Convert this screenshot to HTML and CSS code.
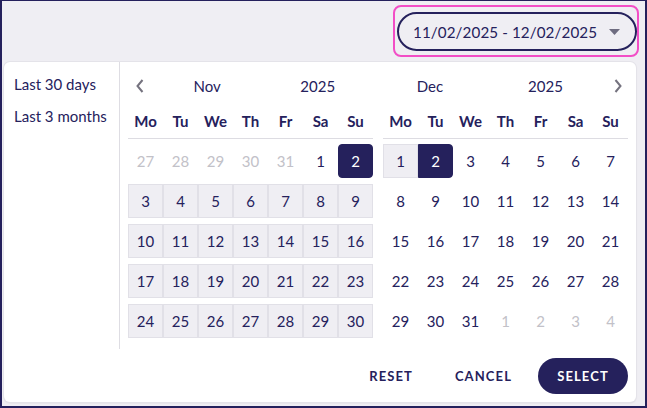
FILE: index.html
```html
<!DOCTYPE html>
<html lang="en">
<head>
<meta charset="utf-8">
<title>Date range picker</title>
<link rel="stylesheet" href="styles.css">
</head>
<body>
<div class="frame">
  <div class="topbar">
    <div class="focus-ring">
      <div class="date-input">
        <span class="date-text">11/02/2025 - 12/02/2025</span>
        <svg class="caret" width="11" height="6" viewBox="0 0 11 6"><path d="M0 0 L11 0 L5.5 6 Z" fill="#6e6c80"/></svg>
      </div>
    </div>
  </div>
  <div class="panel">
    <div class="panel-body">
      <ul class="presets">
        <li>Last 30 days</li>
        <li>Last 3 months</li>
      </ul>
      <div class="calendars">
        <div class="calendar">
          <div class="cal-head cal-head-prev">
            <span class="nav"><svg width="8" height="14" viewBox="0 0 8 14"><path d="M6.5 1 L1.5 7 L6.5 13" fill="none" stroke="#75737f" stroke-width="2"/></svg></span>
            <span class="head-item">Nov</span>
            <span class="head-item">2025</span>
          </div>
          <div class="weekdays">
            <span>Mo</span><span>Tu</span><span>We</span><span>Th</span><span>Fr</span><span>Sa</span><span>Su</span>
          </div>
          <div class="days">
            <span class="day out">27</span><span class="day out">28</span><span class="day out">29</span><span class="day out">30</span><span class="day out">31</span><span class="day">1</span><span class="day sel sel-start sel-end">2</span>
            <span class="day rng">3</span><span class="day rng">4</span><span class="day rng">5</span><span class="day rng">6</span><span class="day rng">7</span><span class="day rng">8</span><span class="day rng">9</span>
            <span class="day rng">10</span><span class="day rng">11</span><span class="day rng">12</span><span class="day rng">13</span><span class="day rng">14</span><span class="day rng">15</span><span class="day rng">16</span>
            <span class="day rng">17</span><span class="day rng">18</span><span class="day rng">19</span><span class="day rng">20</span><span class="day rng">21</span><span class="day rng">22</span><span class="day rng">23</span>
            <span class="day rng">24</span><span class="day rng">25</span><span class="day rng">26</span><span class="day rng">27</span><span class="day rng">28</span><span class="day rng">29</span><span class="day rng">30</span>
          </div>
        </div>
        <div class="calendar">
          <div class="cal-head cal-head-next">
            <span class="head-item month">Dec</span>
            <span class="head-item">2025</span>
            <span class="nav"><svg width="8" height="14" viewBox="0 0 8 14"><path d="M1.5 1 L6.5 7 L1.5 13" fill="none" stroke="#75737f" stroke-width="2"/></svg></span>
          </div>
          <div class="weekdays">
            <span>Mo</span><span>Tu</span><span>We</span><span>Th</span><span>Fr</span><span>Sa</span><span>Su</span>
          </div>
          <div class="days">
            <span class="day rng">1</span><span class="day sel sel-end">2</span><span class="day">3</span><span class="day">4</span><span class="day">5</span><span class="day">6</span><span class="day">7</span>
            <span class="day">8</span><span class="day">9</span><span class="day">10</span><span class="day">11</span><span class="day">12</span><span class="day">13</span><span class="day">14</span>
            <span class="day">15</span><span class="day">16</span><span class="day">17</span><span class="day">18</span><span class="day">19</span><span class="day">20</span><span class="day">21</span>
            <span class="day">22</span><span class="day">23</span><span class="day">24</span><span class="day">25</span><span class="day">26</span><span class="day">27</span><span class="day">28</span>
            <span class="day">29</span><span class="day">30</span><span class="day">31</span><span class="day out">1</span><span class="day out">2</span><span class="day out">3</span><span class="day out">4</span>
          </div>
        </div>
      </div>
    </div>
    <div class="footer">
      <button class="btn btn-text">RESET</button>
      <button class="btn btn-text">CANCEL</button>
      <button class="btn btn-primary">SELECT</button>
    </div>
  </div>
</div>
</body>
</html>
```

FILE: styles.css
```css
* { box-sizing: border-box; }

html, body {
  margin: 0;
  padding: 0;
}

body {
  width: 647px;
  height: 408px;
  overflow: hidden;
  font-family: Lato, "Noto Sans", sans-serif;
  color: #25215c;
}

.frame {
  width: 647px;
  height: 408px;
  background: #efeef3;
  border: 2px solid #24205c;
  border-top-width: 1px;
  display: flex;
  flex-direction: column;
}

.topbar {
  display: flex;
  justify-content: flex-end;
  padding: 4px 6px 0 0;
}

.focus-ring {
  border: 2px solid #f24ec6;
  border-radius: 8px;
  padding: 5px 0 4px 2px;
}

.date-input {
  width: 240px;
  height: 39px;
  border: 2px solid #25215c;
  border-radius: 20px;
  display: flex;
  align-items: center;
  padding: 0 0 0 14px;
}

.date-text {
  font-size: 15.2px;
  color: #25215c;
  white-space: nowrap;
  letter-spacing: 0.1px;
}

.caret { display: block; margin: 1px 0 0 12px; }

.panel {
  margin: 5px 9px 0 2px;
  height: 340px;
  background: #fff;
  border-radius: 6px;
  box-shadow: 0 0 0 1px #e4e3e9, 0 1px 2px rgba(0,0,0,0.12);
  display: flex;
  flex-direction: column;
}

.panel-body {
  display: flex;
  height: 287px;
}

.presets {
  list-style: none;
  margin: 0;
  padding: 11px 0 0 10px;
  width: 116px;
  border-right: 1px solid #dedde3;
  font-size: 15px;
}

.presets li {
  height: 22px;
  line-height: 22px;
  margin-bottom: 10px;
  white-space: nowrap;
}

.calendars {
  display: flex;
  gap: 10px;
  padding: 8px 0 0 8px;
}

.calendar {
  width: 245px;
}

.cal-head {
  display: flex;
  align-items: center;
  height: 32px;
  font-size: 15px;
}

.nav {
  width: 24px;
  display: flex;
  justify-content: center;
  align-items: center;
}

.head-item {
  flex: 1;
  text-align: center;
}

.cal-head-next .month { flex: 0 0 94px; }
.cal-head-next .nav { width: 14px; justify-content: flex-start; }

.weekdays {
  display: grid;
  grid-template-columns: repeat(7, 35px);
  height: 35px;
  margin-top: 2px;
  align-items: center;
  border-bottom: 1px solid #dddce2;
  font-size: 15px;
  font-weight: 700;
  text-align: center;
}

.days {
  display: grid;
  grid-template-columns: repeat(7, 35px);
  grid-auto-rows: 34px;
  row-gap: 6px;
  margin-top: 5px;
}

.day {
  display: flex;
  align-items: center;
  justify-content: center;
  font-size: 15px;
  color: #25215c;
  border: 1px solid transparent;
}

.day.out { color: #c2c1c8; }

.day.rng {
  background: #efeef3;
  border-color: #e1e0e7;
}

.day.sel {
  background: #25215c;
  color: #fff;
  border-color: #25215c;
}

.sel-start { border-top-left-radius: 4px; border-bottom-left-radius: 4px; }
.sel-end { border-top-right-radius: 4px; border-bottom-right-radius: 4px; }

.footer {
  display: flex;
  justify-content: flex-end;
  align-items: center;
  gap: 10px;
  padding: 9px 8px 0 0;
}

.btn {
  font-family: Lato, "Noto Sans", sans-serif;
  font-size: 13px;
  font-weight: 700;
  letter-spacing: 1.1px;
  border: none;
  background: none;
  color: #25215c;
  height: 36px;
  cursor: pointer;
}

.btn-text { padding: 0 16px; }

.btn-primary {
  background: #25215c;
  color: #fff;
  border-radius: 18px;
  width: 90px;
  padding: 0;
}
```
